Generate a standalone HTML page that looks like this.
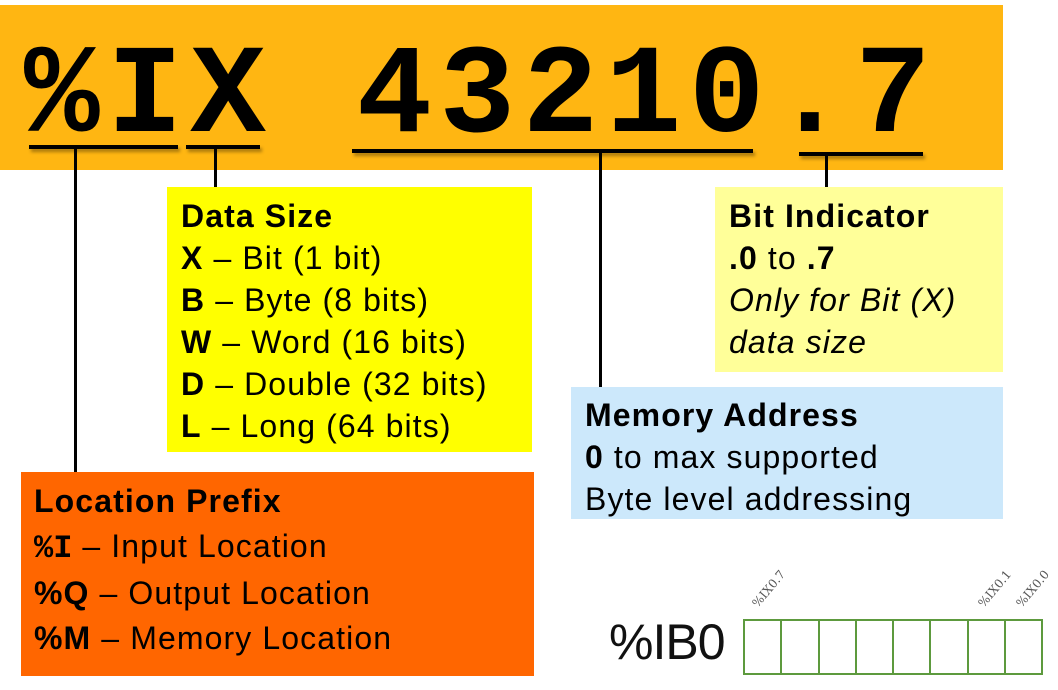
<!DOCTYPE html>
<html><head><meta charset="utf-8"><style>
html,body{margin:0;padding:0;background:#fff;}
body{width:1058px;height:690px;position:relative;overflow:hidden;font-family:"Liberation Sans",sans-serif;}
.a{position:absolute;}
.banner{left:0;top:5px;width:1003px;height:165px;background:#ffb612;}
.big{left:24px;top:35px;font-family:"Liberation Mono",monospace;font-weight:bold;font-size:126px;line-height:126px;white-space:pre;color:#000;letter-spacing:7.5px;}
.hl{background:#000;height:4px;box-shadow:2px 3px 3px rgba(0,0,0,.35);}
.vl{background:#000;width:3px;}
.box{font-size:32px;letter-spacing:1.1px;line-height:42px;color:#000;box-sizing:border-box;white-space:nowrap;}
.box b{font-weight:bold;}
.cells{left:743px;top:619px;width:300px;height:56px;display:flex;}
.cells div{flex:1;border:2px solid #5d9a3e;border-right:none;box-sizing:border-box;}
.cells div:last-child{border-right:2px solid #5d9a3e;}
.rot{font-family:"DejaVu Serif",serif;font-size:12px;color:#555;transform:rotate(-50deg);transform-origin:left bottom;}
</style></head><body>
<div class="a banner"></div>
<div class="a big">%IX 43210.7</div>
<div class="a hl" style="left:29px;top:145px;width:149px"></div>
<div class="a hl" style="left:186px;top:145px;width:74px"></div>
<div class="a hl" style="left:352px;top:149px;width:401px"></div>
<div class="a hl" style="left:799px;top:152px;width:124px"></div>
<div class="a vl" style="left:74px;top:147px;height:325px"></div>
<div class="a vl" style="left:214px;top:147px;height:40px"></div>
<div class="a vl" style="left:599px;top:151px;height:236px"></div>
<div class="a vl" style="left:825px;top:154px;height:33px"></div>

<div class="a box" style="left:167px;top:187px;width:365px;height:265px;background:#ffff00;padding:8px 0 0 14px">
<b>Data Size</b><br><b>X</b> – Bit (1 bit)<br><b>B</b> – Byte (8 bits)<br><b>W</b> – Word (16 bits)<br><b>D</b> – Double (32 bits)<br><b>L</b> – Long (64 bits)</div>

<div class="a box" style="left:715px;top:187px;width:288px;height:185px;background:#ffff99;padding:8px 0 0 14px">
<b>Bit Indicator</b><br><b>.0</b> to <b>.7</b><br><i>Only for Bit (X)</i><br><i>data size</i></div>

<div class="a box" style="left:571px;top:387px;width:432px;height:132px;background:#cce8fb;padding:7px 0 0 14px">
<b>Memory Address</b><br><b>0</b> to max supported<br>Byte level addressing</div>

<div class="a box" style="left:21px;top:472px;width:513px;height:204px;background:#ff6600;padding:7px 0 0 13px;line-height:45px">
<b>Location Prefix</b><br><b style="font-family:'Liberation Mono',monospace;letter-spacing:0">%I</b> – Input Location<br><b>%Q</b> – Output Location<br><b>%M</b> – Memory Location</div>

<div class="a" style="left:609px;top:612px;font-size:50px;line-height:60px;color:#111;letter-spacing:-1px">%IB0</div>
<div class="a cells"><div></div><div></div><div></div><div></div><div></div><div></div><div></div><div></div></div>
<div class="a rot" style="left:760px;top:596px">%IX0.7</div>
<div class="a rot" style="left:986px;top:596px">%IX0.1</div>
<div class="a rot" style="left:1024px;top:596px">%IX0.0</div>
</body></html>
